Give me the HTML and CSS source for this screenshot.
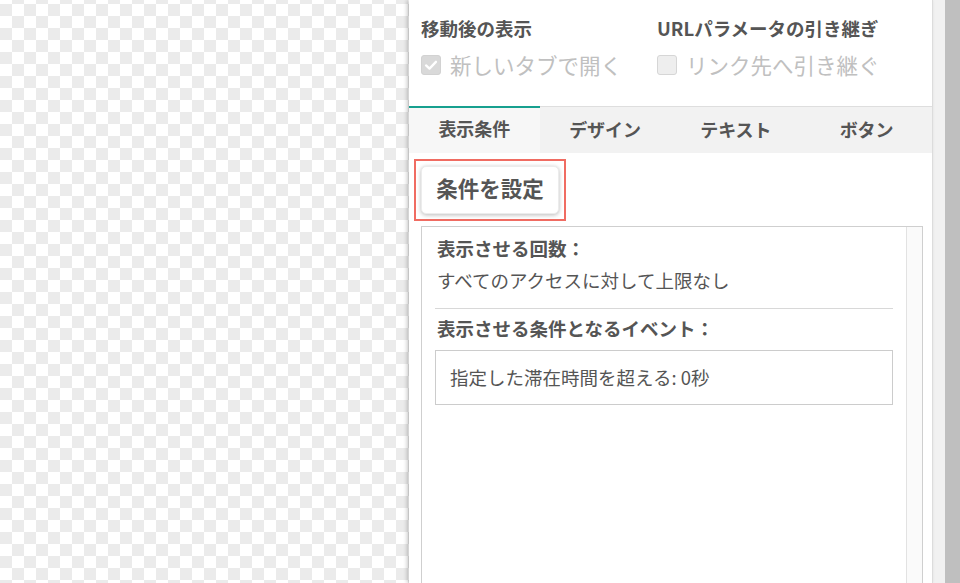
FILE: index.html
```html
<!DOCTYPE html>
<html lang="ja">
<head>
<meta charset="utf-8">
<title>表示条件</title>
<link rel="stylesheet" href="styles.css">
</head>
<body>
<div class="screen">
  <div class="canvas"></div>
  <aside class="panel">
    <section class="options">
      <div class="opt-col">
        <div class="opt-title">移動後の表示</div>
        <label class="check disabled">
          <span class="box checked">
            <svg viewBox="0 0 20 20" width="20" height="20"><path d="M4.5 10.5 L8.3 14 L15.5 6.5" fill="none" stroke="#fff" stroke-width="2.6" stroke-linecap="round" stroke-linejoin="round"/></svg>
          </span>
          <span class="check-label">新しいタブで開く</span>
        </label>
      </div>
      <div class="opt-col">
        <div class="opt-title">URLパラメータの引き継ぎ</div>
        <label class="check disabled">
          <span class="box"></span>
          <span class="check-label">リンク先へ引き継ぐ</span>
        </label>
      </div>
    </section>
    <nav class="tabs">
      <div class="tab active">表示条件</div>
      <div class="tab">デザイン</div>
      <div class="tab">テキスト</div>
      <div class="tab">ボタン</div>
    </nav>
    <section class="content">
      <div class="highlight">
        <button class="set-btn">条件を設定</button>
      </div>
      <div class="cond-box">
        <div class="cond-body">
          <div class="cond-title">表示させる回数：</div>
          <div class="cond-text">すべてのアクセスに対して上限なし</div>
          <hr class="sep">
          <div class="cond-title">表示させる条件となるイベント：</div>
          <div class="event">指定した滞在時間を超える: 0秒</div>
        </div>
        <div class="inner-track"></div>
      </div>
    </section>
  </aside>
  <div class="gutter"></div>
  <div class="outer-track"></div>
</div>
</body>
</html>
```

FILE: styles.css
```css
html, body {
  margin: 0;
  padding: 0;
  height: 100%;
  overflow: hidden;
}
body {
  font-family: "Noto Sans CJK JP", "Noto Sans", sans-serif;
  color: #555;
}
.screen {
  display: flex;
  width: 960px;
  height: 583px;
  overflow: hidden;
}
.canvas {
  width: 409px;
  flex: none;
  background-color: #ffffff;
  background-image: repeating-conic-gradient(#ebebeb 0% 25%, #ffffff 0% 50%);
  background-size: 24px 24px;
  background-position: 0 -8px;
}
.panel {
  width: 523px;
  flex: none;
  background: #fff;
  border-right: 1px solid #dcdcdc;
  box-shadow: -2px 0 4px rgba(0, 0, 0, 0.22);
  display: flex;
  flex-direction: column;
  position: relative;
}
.gutter {
  width: 12px;
  flex: none;
  background: #f1f1f1;
}
.outer-track {
  width: 15px;
  flex: none;
  background: #bfbfbf;
}
.options {
  display: flex;
  padding: 15px 12px 26px;
  border-bottom: 1px solid #dedede;
}
.opt-col {
  width: 236px;
  flex: none;
}
.opt-title {
  font-size: 18.5px;
  line-height: 27px;
  font-weight: 700;
  color: #555;
}
.check {
  display: flex;
  align-items: center;
  gap: 9px;
  margin-top: 8px;
  height: 30px;
}
.box {
  width: 18px;
  height: 18px;
  border: 1px solid #d6d6d6;
  border-radius: 3px;
  background: #eeeeee;
  display: flex;
  align-items: center;
  justify-content: center;
  flex: none;
}
.box.checked {
  background: #d9d9d9;
  border-color: #d2d2d2;
}
.check-label {
  font-size: 21.5px;
  line-height: 30px;
  color: #c0c0c0;
}
.tabs {
  display: flex;
  background: #f2f2f2;
  height: 46px;
}
.tab {
  flex: 1;
  text-align: center;
  font-size: 18px;
  font-weight: 700;
  line-height: 40px;
  padding-bottom: 4px;
  border-top: 2px solid transparent;
  color: #555;
}
.tab.active {
  border-top-color: #17a08f;
  background: #f7f7f7;
  margin-top: -1px;
  line-height: 41px;
}
.content {
  padding: 6px 0 0 5px;
  flex: 1;
}
.highlight {
  display: inline-block;
  border: 2px solid #f06c62;
  padding: 5px;
}
.set-btn {
  display: block;
  width: 138px;
  height: 48px;
  border: 1px solid #ececec;
  border-radius: 5px;
  background: #fff;
  box-shadow: 0 1px 4px rgba(0, 0, 0, 0.28);
  font-family: inherit;
  font-size: 21.5px;
  font-weight: 700;
  color: #555;
  padding: 0 0 5px;
}
.cond-box {
  margin: 5px 0 0 7px;
  width: 500px;
  height: 400px;
  border: 1px solid #cfcfcf;
  display: flex;
}
.cond-body {
  flex: 1;
  padding: 8px 13px 0;
}
.inner-track {
  width: 15px;
  flex: none;
  background: #fafafa;
  border-left: 1px solid #e2e2e2;
}
.cond-title {
  font-size: 18.5px;
  line-height: 27px;
  font-weight: 700;
  padding-left: 2px;
}
.cond-text {
  font-size: 18.5px;
  line-height: 27px;
  margin-top: 5px;
  padding-left: 2px;
}
.sep {
  border: 0;
  border-top: 1px solid #d8d8d8;
  margin: 14px 0 6px;
}
.event {
  margin-top: 8px;
  border: 1px solid #cccccc;
  padding: 13px 14px;
  font-size: 18.5px;
  line-height: 27px;
}
```
